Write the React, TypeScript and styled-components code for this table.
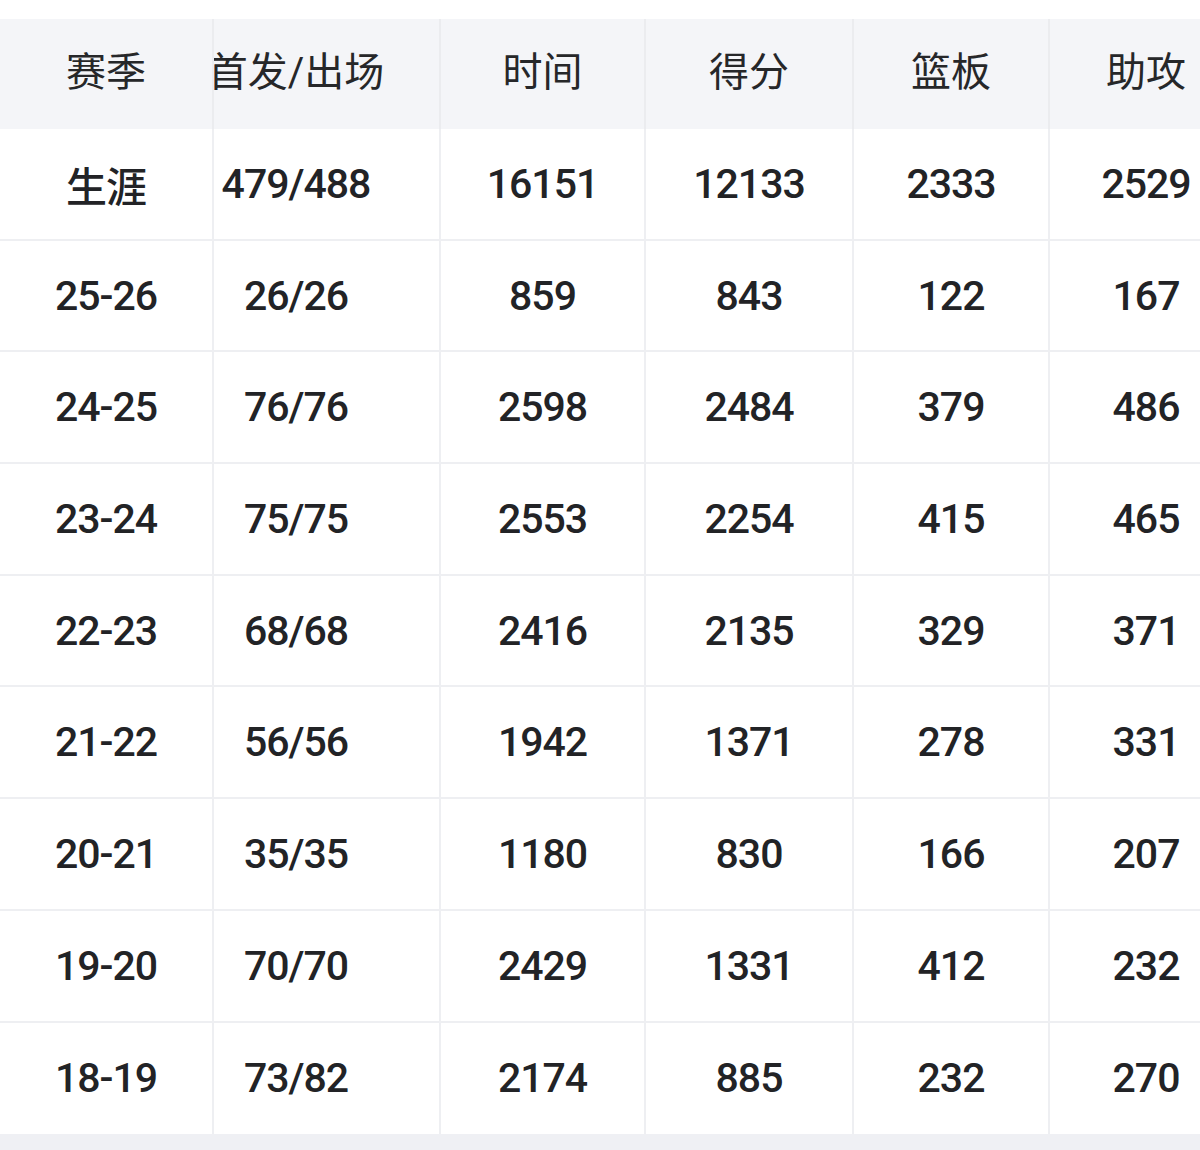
import React, { useLayoutEffect, useRef } from 'react'
import styled, { createGlobalStyle } from 'styled-components'

const GlobalStyle = createGlobalStyle`
    html, body {
        margin: 0;
        padding: 0;
        background: #ffffff;
    }
    body {
        font-family: Roboto, "Noto Sans CJK SC", sans-serif;
        color: #222326;
    }
`;

type Row = [string, string, string, string, string, string];

const columns = ["赛季", "首发/出场", "时间", "得分", "篮板", "助攻"];
const widths = [214, 288, 205, 208, 196, 194];

const rows: Row[] = [
    ["生涯", "479/488", "16151", "12133", "2333", "2529"],
    ["25-26", "26/26", "859", "843", "122", "167"],
    ["24-25", "76/76", "2598", "2484", "379", "486"],
    ["23-24", "75/75", "2553", "2254", "415", "465"],
    ["22-23", "68/68", "2416", "2135", "329", "371"],
    ["21-22", "56/56", "1942", "1371", "278", "331"],
    ["20-21", "35/35", "1180", "830", "166", "207"],
    ["19-20", "70/70", "2429", "1331", "412", "232"],
    ["18-19", "73/82", "2174", "885", "232", "270"],
];

export default function App() {
    const scroller = useRef<HTMLDivElement>(null);

    // the table is shown scrolled a little to the right, first column stays put
    useLayoutEffect(() => {
        if (scroller.current) scroller.current.scrollLeft = 61;
    }, []);

    return (
        <Page>
            <GlobalStyle />
            <Scroller ref={scroller}>
                <Table>
                    <colgroup>
                        {widths.map((w, i) => <col key={i} style={{ width: w }} />)}
                    </colgroup>
                    <thead>
                        <tr>
                            {columns.map((c, i) => (
                                <HeadCell key={c} sticky={i === 0}>{c}</HeadCell>
                            ))}
                        </tr>
                    </thead>
                    <tbody>
                        {rows.map((r, ri) => (
                            <BodyRow key={r[0]}>
                                {r.map((v, i) => (
                                    <Cell key={i} sticky={i === 0} last={ri === rows.length - 1}>
                                        {v}
                                    </Cell>
                                ))}
                            </BodyRow>
                        ))}
                    </tbody>
                </Table>
            </Scroller>
            <Footer />
        </Page>
    )
}

const Page = styled.div`
    display: flex;
    flex-direction: column;
    min-height: 1150px;
    padding-top: 19px;
    box-sizing: border-box;
`;

const Scroller = styled.div`
    overflow-x: auto;
    scrollbar-width: none;
    &::-webkit-scrollbar {
        display: none;
    }
`;

const Table = styled.table`
    table-layout: fixed;
    border-collapse: separate;
    border-spacing: 0;
    width: 1305px;
`;

const HeadCell = styled.th<{ sticky?: boolean }>`
    height: 110px;
    padding: 0 0 10px 0;
    box-sizing: border-box;
    background: #f4f5f8;
    border-right: 2px solid #ebecef;
    font-weight: 400;
    font-size: 40px;
    color: #262729;
    text-align: center;
    white-space: nowrap;
    overflow: hidden;
    position: ${p => p.sticky ? 'sticky' : 'static'};
    left: 0;
    z-index: ${p => p.sticky ? 2 : 'auto'};
`;

const BodyRow = styled.tr`
    background: #ffffff;
`;

const Cell = styled.td<{ sticky?: boolean; last?: boolean }>`
    height: 111.7px;
    padding: 0;
    box-sizing: border-box;
    background: #ffffff;
    border-right: 2px solid #eeeff2;
    border-bottom: ${p => p.last ? 'none' : '2px solid #eeeff2'};
    font-size: 41px;
    font-weight: 500;
    letter-spacing: -1px;
    color: #222326;
    text-align: center;
    white-space: nowrap;
    position: ${p => p.sticky ? 'sticky' : 'static'};
    left: 0;
    z-index: ${p => p.sticky ? 1 : 'auto'};
`;

const Footer = styled.div`
    flex: 1;
    background: #eff0f4;
`;
